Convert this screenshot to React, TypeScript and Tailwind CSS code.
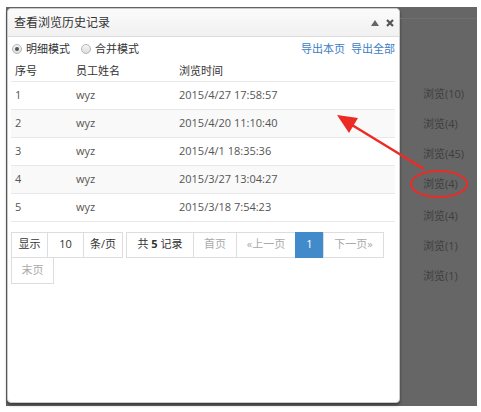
import React from 'react';

const rows = [
  { id: 1, name: 'wyz', time: '2015/4/27 17:58:57' },
  { id: 2, name: 'wyz', time: '2015/4/20 11:10:40' },
  { id: 3, name: 'wyz', time: '2015/4/1 18:35:36' },
  { id: 4, name: 'wyz', time: '2015/3/27 13:04:27' },
  { id: 5, name: 'wyz', time: '2015/3/18 7:54:23' },
];

const sideCounts = ['浏览(10)', '浏览(4)', '浏览(45)', '浏览(4)', '浏览(4)', '浏览(1)', '浏览(1)'];

function Radio({ checked, label }: { checked?: boolean; label: string }) {
  return (
    <label className="flex items-center gap-[4px]">
      <span className="w-[10px] h-[10px] rounded-full border border-[#b5b5b5] bg-gradient-to-b from-[#f4f4f4] to-[#dedede] flex items-center justify-center">
        {checked && <span className="w-[4px] h-[4px] rounded-full bg-[#555]" />}
      </span>
      <span>{label}</span>
    </label>
  );
}

function PageBox({
  children,
  className = '',
}: {
  children: React.ReactNode;
  className?: string;
}) {
  return (
    <div
      className={`h-[26px] flex items-center justify-center border border-[#ddd] bg-white ${className}`}
    >
      {children}
    </div>
  );
}

export default function App() {
  return (
    <div className="relative w-[481px] h-[412px] bg-white pt-[7px] pl-[6px] font-['Open_Sans','Noto_Sans_CJK_SC',sans-serif] text-[11px]">
      <div className="w-[471px] h-[399px] bg-[#666] flex">
        {/* Dialog */}
        <div className="mt-[1px] ml-[1px] w-[393px] h-[395px] bg-white rounded-[4px] border border-[#c9c9c9] shadow-[0_2px_3px_rgba(0,0,0,0.45)] flex flex-col">
          {/* Title bar */}
          <div className="h-[28px] shrink-0 flex items-center justify-between pl-[6px] pr-[5px] bg-gradient-to-b from-[#fbfbfb] to-[#f1f1f1] border-b border-[#dcdcdc] rounded-t-[4px]">
            <span className="text-[#333] text-[12px]">查看浏览历史记录</span>
            <div className="flex items-center gap-[7px] text-[#555]">
              <svg width="8" height="6" viewBox="0 0 8 6">
                <path d="M0 6 L4 0 L8 6 Z" fill="#666" />
              </svg>
              <svg width="8" height="8" viewBox="0 0 8 8">
                <path d="M1 1 L7 7 M7 1 L1 7" stroke="#555" strokeWidth="2.2" />
              </svg>
            </div>
          </div>

          <div className="px-[3px]">
            {/* Mode toolbar */}
            <div className="h-[24px] flex items-center justify-between pl-[1px] pr-[1px] text-[#333]">
              <div className="flex items-center gap-[11px]">
                <Radio checked label="明细模式" />
                <Radio label="合并模式" />
              </div>
              <div className="flex items-center gap-[6px] text-[#3b7dc4]">
                <span>导出本页</span>
                <span>导出全部</span>
              </div>
            </div>

            {/* Table */}
            <table className="w-[384px] border-collapse">
              <thead>
                <tr className="h-[20px] text-left text-[#333]">
                  <th className="w-[61px] pl-[4px] font-normal">序号</th>
                  <th className="w-[103px] pl-[4px] font-normal">员工姓名</th>
                  <th className="pl-[4px] font-normal">浏览时间</th>
                </tr>
              </thead>
              <tbody>
                {rows.map((r, i) => (
                  <tr
                    key={r.id}
                    className={`h-[28px] border-t border-b border-[#e8e8e8] text-[#555] ${
                      i % 2 === 1 ? 'bg-[#f9f9f9]' : 'bg-white'
                    }`}
                  >
                    <td className="pl-[4px]">{r.id}</td>
                    <td className="pl-[4px]">{r.name}</td>
                    <td className="pl-[4px]">{r.time}</td>
                  </tr>
                ))}
              </tbody>
            </table>

            {/* Pagination */}
            <div className="mt-[10px] w-[384px] flex flex-wrap text-[#aaa]">
              <PageBox className="w-[37px] text-[#333]">显示</PageBox>
              <PageBox className="w-[37px] -ml-px text-[#333]">10</PageBox>
              <PageBox className="w-[40px] -ml-px text-[#333]">条/页</PageBox>
              <PageBox className="w-[68px] ml-[3px] text-[#333]">
                共&nbsp;<b className="font-bold">5</b>&nbsp;记录
              </PageBox>
              <PageBox className="w-[44px] -ml-px">首页</PageBox>
              <PageBox className="w-[60px] -ml-px">«上一页</PageBox>
              <PageBox className="w-[29px] -ml-px !bg-[#428bca] !border-[#428bca] text-white">1</PageBox>
              <PageBox className="w-[61px] -ml-px">下一页»</PageBox>
              <PageBox className="w-[43px] h-[27px] -mt-px">末页</PageBox>
            </div>
          </div>
        </div>

        {/* Background page (masked) */}
        <div className="flex-1 relative">
          <div className="mt-[11px] border-t border-[#6f6f6f]" />
          <div className="pt-[60px] pl-[23px] flex flex-col text-[#3e3e3e] text-[11px]">
            {sideCounts.map((t, i) => (
              <div key={i} className={`h-[30px] leading-[30px] ${i === 4 ? 'mt-[2px]' : ''}`}>
                {t}
              </div>
            ))}
          </div>
        </div>
      </div>

      {/* Annotation: arrow + ellipse */}
      <svg className="absolute left-0 top-0 pointer-events-none" width="481" height="412">
        <line x1="424" y1="169" x2="352" y2="125" stroke="#ec2b24" strokeWidth="2.5" />
        <path d="M337 115 L358 118 L349 133 Z" fill="#ec2b24" />
        <ellipse cx="439" cy="184" rx="28" ry="13" fill="none" stroke="#ec2b24" strokeWidth="2" />
      </svg>
    </div>
  );
}
